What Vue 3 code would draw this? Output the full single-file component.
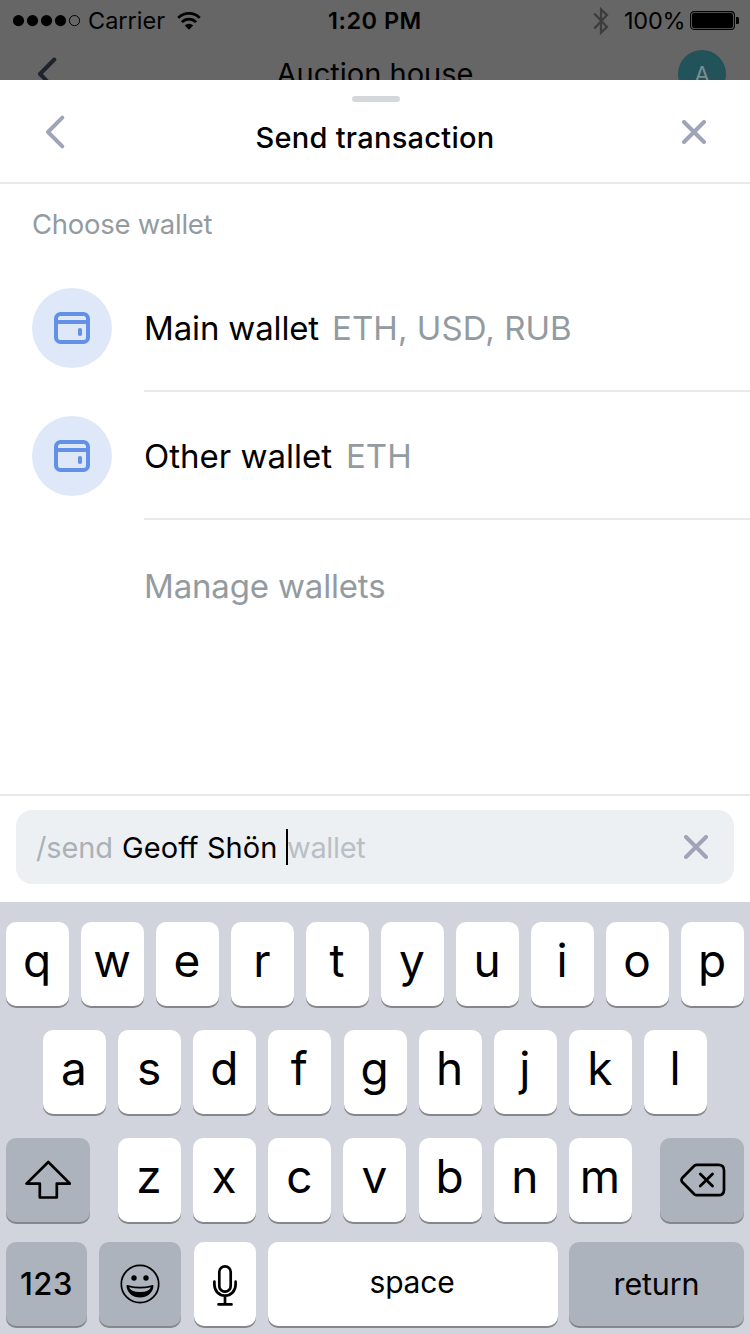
<script setup>
const wallets = [
  { name: 'Main wallet', assets: 'ETH, USD, RUB', id: 'main' },
  { name: 'Other wallet', assets: 'ETH', id: 'other' },
]
const topRow = [...'qwertyuiop']
const homeRow = [...'asdfghjkl']
const bottomRow = [...'zxcvbnm']
</script>

<template>
  <div class="screen">
    <div class="backdrop">
      <div class="status">
        <svg class="dots" width="68" height="14" viewBox="0 0 68 14">
          <circle cx="5.5" cy="6.6" r="5.6" />
          <circle cx="19.5" cy="6.6" r="5.6" />
          <circle cx="33.5" cy="6.6" r="5.6" />
          <circle cx="47.5" cy="6.6" r="5.6" />
          <circle cx="61.5" cy="6.6" r="5.1" fill="none" stroke="#000" />
        </svg>
        <span class="carrier">Carrier</span>
        <svg class="wifi" width="24" height="18" viewBox="0 0 24 18">
          <g fill="none" stroke="#000" stroke-width="2.7">
            <path d="M1.2 5.9a15.3 15.3 0 0 1 21.6 0" />
            <path d="M4.9 10.1a10 10 0 0 1 14.2 0" />
          </g>
          <path d="M12 17.7l-4.2-4.2a6 6 0 0 1 8.4 0z" />
        </svg>
        <span class="clock">1:20 PM</span>
        <svg class="bluetooth" width="18" height="30" viewBox="0 0 18 30">
          <path d="M2.3 7.6L15 20.9L9 26.6V3.4L15 9.1L2.3 22.4" fill="none" stroke="#3c3c3c" stroke-width="2.2" />
        </svg>
        <span class="percent">100%</span>
        <svg class="battery" width="50" height="20" viewBox="0 0 50 20">
          <rect x=".6" y=".6" width="43.8" height="17.8" rx="3.4" fill="none" stroke="#000" stroke-width="1.1" />
          <rect x="2" y="2" width="41" height="15" rx="2" />
          <path d="M46 6h1.5q1.5 0 1.5 1.5v4q0 1.5-1.5 1.5H46z" />
        </svg>
      </div>
      <div class="page-nav">
        <svg class="chev" width="24" height="36" viewBox="0 0 24 36">
          <path d="M18.3 3.5L4 18L18.3 32.5" fill="none" stroke="#1f242c" stroke-width="4" stroke-linecap="round" stroke-linejoin="round" />
        </svg>
        <span class="page-title">Auction house</span>
        <span class="avatar">A</span>
      </div>
    </div>

    <section class="sheet">
      <header class="sheet-head">
        <i class="grip"></i>
        <svg class="back" width="24" height="36" viewBox="0 0 24 36">
          <path d="M18.3 3.7L4 18L18.3 32.3" fill="none" stroke="#a0a4b8" stroke-width="4" stroke-linecap="round" stroke-linejoin="round" />
        </svg>
        <h1>Send transaction</h1>
        <svg class="close" width="24" height="24" viewBox="0 0 24 24">
          <path d="M2 2L22 22M22 2L2 22" stroke="#a0a4b8" stroke-width="4" stroke-linecap="round" />
        </svg>
      </header>

      <div class="content">
        <div class="caption"><span>Choose wallet</span></div>
        <div v-for="w in wallets" :key="w.id" class="wallet">
          <span class="badge">
            <svg width="36" height="32" viewBox="0 0 36 32">
              <rect x="2" y="2" width="32" height="28" rx="4.5" fill="none" stroke="#6290e6" stroke-width="4" />
              <path d="M2 10H34" stroke="#6290e6" stroke-width="4" />
              <rect x="24" y="16" width="4" height="8" rx="1.8" fill="#6290e6" />
            </svg>
          </span>
          <div class="wallet-text">
            <span :class="['name', w.id]">{{ w.name }}</span>
            <span :class="['assets', w.id]">{{ w.assets }}</span>
          </div>
        </div>
        <div class="manage"><span>Manage wallets</span></div>
      </div>

      <div class="composer">
        <div class="field">
          <span class="command">/send</span>
          <span class="typed">Geoff Shön</span>
          <i class="caret"></i>
          <span class="hint">wallet</span>
          <svg class="clear" width="24" height="24" viewBox="0 0 24 24">
            <path d="M2 2L22 22M22 2L2 22" stroke="#a3a3b8" stroke-width="4" stroke-linecap="round" />
          </svg>
        </div>
      </div>
    </section>

    <div class="keyboard">
      <div class="row first">
        <span v-for="k in topRow" :key="k" class="key letter"><b>{{ k }}</b></span>
      </div>
      <div class="row second">
        <span v-for="k in homeRow" :key="k" class="key letter"><b>{{ k }}</b></span>
      </div>
      <div class="row third">
        <span class="key dark side">
          <svg width="46" height="40" viewBox="0 0 46 40">
            <path d="M23.3 2L1.5 23.6H14.8V37.5H31.8V23.6H45L23.3 2Z" fill="none" stroke="#000" stroke-width="2.7" stroke-linejoin="round" />
          </svg>
        </span>
        <div class="mid">
          <span v-for="k in bottomRow" :key="k" class="key letter"><b>{{ k }}</b></span>
        </div>
        <span class="key dark side delete">
          <svg width="46" height="34" viewBox="0 0 46 34">
            <path d="M17 1.8H38.5Q44 1.8 44 7.3V26.7Q44 32.2 38.5 32.2H17Q15.5 32.2 14.3 31.2L2.2 19Q.8 17 2.2 15L14.3 2.8Q15.5 1.8 17 1.8Z" fill="none" stroke="#000" stroke-width="2.7" stroke-linejoin="round" />
            <path d="M20.3 11L32.5 23M32.5 11L20.3 23" stroke="#000" stroke-width="2.8" stroke-linecap="round" />
          </svg>
        </span>
      </div>
      <div class="row fourth">
        <span class="key dark numbers"><b>123</b></span>
        <span class="key dark emoji">
          <svg width="40" height="40" viewBox="0 0 40 40">
            <circle cx="20" cy="20" r="18.7" fill="none" stroke="#000" stroke-width="1.7" />
            <circle cx="14" cy="14" r="2.7" />
            <circle cx="26" cy="14" r="2.7" />
            <path d="M6.5 22.2Q6.4 20.7 8.2 21.2Q20 24.4 31.8 21.2Q33.6 20.7 33.5 22.2C32.6 29 27.2 33.5 20 33.5S7.4 29 6.5 22.2Z" />
            <path d="M9.2 23.2Q20 26 30.8 23.2Q29.8 28 20 28T9.200 23.200Z" fill="#acb3bc" />
          </svg>
        </span>
        <span class="key mic">
          <svg width="26" height="42" viewBox="0 0 26 42">
            <g fill="none" stroke="#000" stroke-width="2.7" stroke-linecap="round">
              <rect x="7.3" y="2.4" width="11.4" height="25.2" rx="5.7" />
              <path d="M2.4 17.7V20.5C2.4 27 7 31.7 13 31.7S23.6 27 23.6 20.5V17.7M13 32V40M6.5 40.4H19.5" />
            </g>
          </svg>
        </span>
        <span class="key space"><b>space</b></span>
        <span class="key dark return"><b>return</b></span>
      </div>
    </div>
  </div>
</template>

<style>
html,
body {
  margin: 0;
  overflow: hidden;
}
</style>

<style scoped>
.screen {
  width: 750px;
  height: 1334px;
  display: flex;
  flex-direction: column;
  overflow: hidden;
  background: #fff;
  color: #000;
  font-family: Inter, "Liberation Sans", sans-serif;
  font-kerning: normal;
}
.screen * {
  box-sizing: border-box;
}
svg {
  display: block;
  flex: none;
}
span {
  white-space: nowrap;
}
.backdrop {
  height: 80px;
  flex: none;
  overflow: hidden;
  background: #666;
}
.status {
  height: 42px;
  display: flex;
  align-items: center;
  font-size: 23.5px;
  line-height: 42px;
}
.dots {
  margin-left: 13px;
}
.carrier {
  width: 89px;
  margin-left: 7px;
}
.wifi {
  margin-top: -1px;
}
.clock {
  width: 264px;
  margin-left: 127px;
  font-weight: 600;
  letter-spacing: 0.48px;
  line-height: 44px;
}
.bluetooth {
  margin-top: -1px;
}
.percent {
  width: 66px;
  margin-left: 14px;
  letter-spacing: -0.2px;
}
.page-nav {
  height: 64px;
  display: flex;
  align-items: center;
  justify-content: space-between;
  padding: 0 24px 0 36px;
}
.chev {
  margin-right: 12px;
}
.page-title {
  font-size: 29px;
  line-height: 40px;
}
.avatar {
  width: 48px;
  height: 48px;
  border-radius: 50%;
  background: #22525a;
  color: #7c8d90;
  text-align: center;
  font-size: 22px;
  line-height: 48px;
}
.sheet {
  height: 822px;
  flex: none;
  display: flex;
  flex-direction: column;
}
.sheet-head {
  height: 104px;
  flex: none;
  position: relative;
  display: flex;
  justify-content: space-between;
  padding: 34px 44px 0 44px;
  border-bottom: 2px solid #e6eaea;
}
.grip {
  position: absolute;
  left: 352px;
  top: 16px;
  width: 48px;
  height: 6px;
  border-radius: 3px;
  background: #d5d7da;
}
h1 {
  margin: 4px 0 0;
  font-size: 29px;
  line-height: 40px;
  font-weight: 500;
  letter-spacing: 0.27px;
}
.close {
  margin-top: 6px;
}
.content {
  flex: 1;
}
.caption {
  height: 80px;
  padding-left: 32px;
  color: #939ba1;
  font-size: 27.5px;
  line-height: 80px;
  letter-spacing: -0.28px;
}
.wallet {
  height: 128px;
  display: flex;
  padding-left: 32px;
}
.badge {
  width: 80px;
  height: 80px;
  margin: 24px 32px 0 0;
  border-radius: 50%;
  background: #dfe8f9;
  display: flex;
  align-items: center;
  justify-content: center;
}
.wallet-text {
  flex: 1;
  display: flex;
  border-bottom: 2px solid #e6eaea;
  font-size: 33px;
  line-height: 128px;
}
.name.main {
  width: 188px;
  letter-spacing: -0.15px;
}
.name.other {
  width: 202px;
}
.assets {
  color: #939ba1;
}
.assets.main {
  letter-spacing: 0.08px;
}
.manage {
  height: 132px;
  padding-left: 144px;
  color: #939ba1;
  font-size: 33px;
  line-height: 132px;
  letter-spacing: -0.17px;
}
.composer {
  height: 108px;
  flex: none;
  padding: 14px 16px 0;
  border-top: 2px solid #e6eaea;
}
.field {
  height: 74px;
  border-radius: 16px;
  background: #ecf0f3;
  display: flex;
  align-items: center;
  padding-left: 20px;
  font-size: 29px;
  line-height: 40px;
}
.field span {
  padding-top: 2px;
}
.command {
  width: 86px;
  color: #acb1b6;
  letter-spacing: -0.15px;
}
.typed {
  width: 164px;
  letter-spacing: 0.08px;
}
.caret {
  width: 2px;
  height: 36px;
  background: #000;
}
.hint {
  width: 397px;
  margin-left: -1px;
  color: #b9bfc4;
  letter-spacing: -0.35px;
}
.keyboard {
  flex: 1;
  background: #d1d4dc;
  padding: 20px 6px 0;
}
.row {
  display: flex;
  height: 86px;
}
.first {
  gap: 12px;
}
.second {
  margin-top: 22px;
  padding: 0 37px;
  justify-content: space-between;
}
.third {
  margin-top: 22px;
  justify-content: space-between;
}
.mid {
  width: 514px;
  display: flex;
  justify-content: space-between;
}
.fourth {
  margin-top: 18px;
}
.key {
  height: 84px;
  flex: none;
  border-radius: 10px;
  background: #fff;
  box-shadow: 0 2px 0 #85878c;
  display: flex;
  align-items: center;
  justify-content: center;
}
.key b {
  font-weight: 400;
}
.dark {
  background: #acb3bc;
}
.letter {
  width: 63px;
  font-size: 46px;
  line-height: 76px;
  padding-bottom: 8px;
  padding-right: 1px;
}
.side {
  width: 84px;
}
.delete {
  padding-left: 2px;
}
.numbers {
  width: 81px;
  margin-right: 12px;
  font-size: 31px;
  line-height: 82px;
}
.numbers b {
  font-weight: 500;
  letter-spacing: 0.6px;
}
.emoji {
  width: 82px;
  margin-right: 13px;
}
.mic {
  width: 62px;
  margin-right: 12px;
}
.mic svg {
  margin-top: 2px;
}
.space {
  width: 290px;
  margin-right: 11px;
  font-size: 30px;
  padding-bottom: 4px;
  padding-right: 2px;
}
.space b {
  letter-spacing: -0.2px;
}
.return {
  width: 175px;
  font-size: 30.5px;
  line-height: 84px;
}
.return b {
  letter-spacing: -0.15px;
}
</style>
